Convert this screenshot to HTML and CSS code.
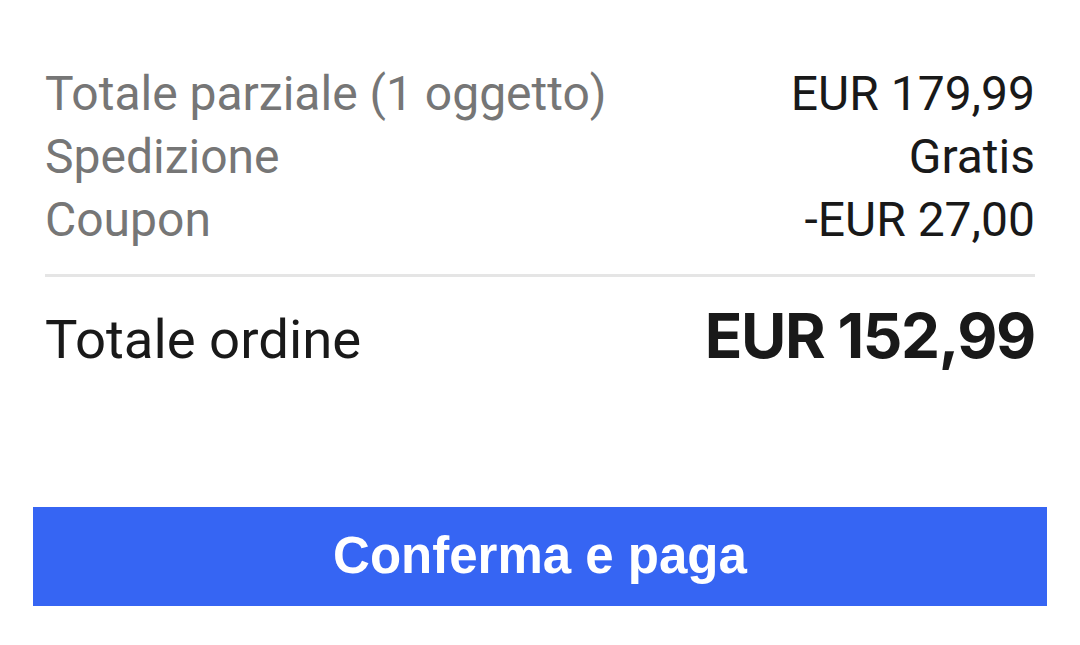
FILE: index.html
```html
<!DOCTYPE html>
<html lang="it">
<head>
<meta charset="utf-8">
<link rel="stylesheet" href="styles.css">
</head>
<body>
<div class="summary">
  <div class="rows">
    <div class="row"><span class="label">Totale parziale (1 oggetto)</span><span class="value">EUR 179,99</span></div>
    <div class="row"><span class="label">Spedizione</span><span class="value">Gratis</span></div>
    <div class="row"><span class="label">Coupon</span><span class="value">-EUR 27,00</span></div>
  </div>
  <div class="total">
    <span class="total-label">Totale ordine</span>
    <span class="total-value">EUR 152,99</span>
  </div>
</div>
<div class="actions">
  <button class="pay">Conferma e paga</button>
</div>
</body>
</html>
```

FILE: styles.css
```css
html, body {
  margin: 0;
  padding: 0;
  background: #ffffff;
}
body {
  width: 1080px;
  height: 645px;
  overflow: hidden;
  font-family: Roboto, "Noto Sans", sans-serif;
}
.summary {
  padding: 62px 45px 0 45px;
}
.rows {
  display: flex;
  flex-direction: column;
  padding-bottom: 23px;
  border-bottom: 3px solid #e5e5e5;
}
.row {
  display: flex;
  justify-content: space-between;
  align-items: baseline;
  font-size: 48px;
  line-height: 63px;
}
.label {
  color: #767676;
}
.value {
  color: #191919;
}
.total {
  display: flex;
  justify-content: space-between;
  align-items: baseline;
  padding-top: 19px;
}
.total-label {
  font-size: 54.5px;
  line-height: 80px;
  color: #191919;
}
.total-value {
  font-family: Inter, "Liberation Sans", sans-serif;
  font-weight: 700;
  font-size: 62px;
  letter-spacing: -1.4px;
  line-height: 80px;
  color: #191919;
}
.actions {
  padding: 0 33px;
  margin-top: 128px;
}
.pay {
  display: block;
  width: 100%;
  height: 99px;
  border: 0;
  border-radius: 0;
  background: #3665f3;
  color: #ffffff;
  font-family: "Liberation Sans", Arial, sans-serif;
  font-weight: 700;
  font-size: 51px;
  padding: 0 0 3px 0;
}
```
